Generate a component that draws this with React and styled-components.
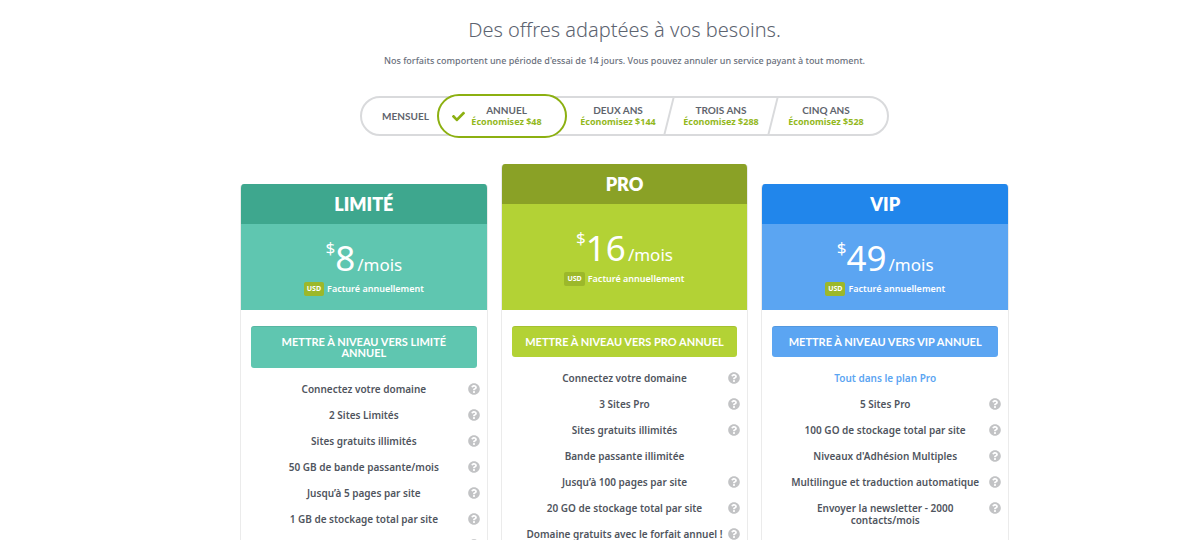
import React, { useState } from "react"
import styled, { createGlobalStyle } from "styled-components"

import { FaCheck, FaQuestionCircle } from "react-icons/fa"

const GlobalStyle = createGlobalStyle`
  * {
    box-sizing: border-box;
  }
  body {
    margin: 0;
    background-color: #fff;
    color: #50555e;
    font-family: "Noto Sans", "Open Sans", sans-serif;
  }
`

const Page = styled.main`
  display: flex;
  flex-direction: column;
  align-items: center;
  padding: 16px 0 0 49px;
`

const Title = styled.h1`
  margin: 0;
  font-size: 20px;
  line-height: 28px;
  font-weight: 300;
  color: #5c6370;
`

const Intro = styled.p`
  margin: 9px 0 27px;
  font-size: 9px;
  line-height: 16px;
  font-weight: 500;
  color: #6a707c;
`

const Periods = styled.div`
  display: flex;
  height: 40px;
  border: 2px solid #d9dadc;
  border-radius: 20px;
`

const Period = styled.button`
  position: relative;
  display: flex;
  align-items: center;
  justify-content: center;
  gap: 6px;
  width: ${(props) => props.$width || 104}px;
  padding: ${(props) => props.$padding || "0"};
  border: none;
  background-color: transparent;
  font-family: inherit;
  cursor: pointer;

  ${(props) =>
    props.$divided &&
    `
    &::after {
      content: "";
      position: absolute;
      top: 0;
      bottom: 0;
      right: -1px;
      width: 2px;
      background-color: #d9dadc;
      transform: skewX(-14deg);
    }
  `}

  ${(props) =>
    props.$active &&
    `
    margin: -4px 0;
    border: 2px solid #8cb011;
    border-radius: 22px;
    background-color: #fff;
    color: #8cb011;
  `}
`

const PeriodText = styled.span`
  display: flex;
  flex-direction: column;
  align-items: center;
`

const PeriodName = styled.span`
  font-family: Lato, sans-serif;
  font-size: 10px;
  line-height: 11px;
  font-weight: 700;
  color: #5f646d;
`

const Saving = styled.span`
  font-size: 9px;
  line-height: 11px;
  font-weight: 700;
  color: #93b81c;
`

const Plans = styled.div`
  display: flex;
  align-items: flex-start;
  justify-content: center;
  gap: 13px;
  width: 100%;
  max-width: 769px;
  margin-top: 28px;
`

const Card = styled.section`
  flex: 1;
  margin-top: ${(props) => (props.$featured ? "0" : "20px")};
  border: 1px solid #ebebeb;
  border-top: none;
  border-radius: 4px;
  overflow: hidden;
`

const PlanName = styled.h2`
  margin: 0;
  background-color: ${(props) => props.$color};
  font-family: Lato, sans-serif;
  font-size: 18px;
  line-height: 40px;
  font-weight: 800;
  text-align: center;
  color: #fff;
`

const PriceBox = styled.div`
  display: flex;
  flex-direction: column;
  align-items: center;
  padding: ${(props) => (props.$featured ? "20px 0 24px" : "10px 0 14px")};
  background-color: ${(props) => props.$color};
  color: #fff;
`

const Price = styled.div`
  display: flex;
  align-items: baseline;
  height: 48px;
`

const Currency = styled.span`
  align-self: flex-start;
  font-size: 17px;
  line-height: 28px;
`

const Amount = styled.span`
  font-size: 35px;
  line-height: 48px;
`

const PerMonth = styled.span`
  margin-left: 2px;
  font-size: 17px;
  line-height: 20px;
`

const Billing = styled.div`
  display: flex;
  align-items: center;
  gap: 3px;
  font-size: 9px;
  line-height: 14px;
  font-weight: 600;
`

const Badge = styled.span`
  padding: 0 3px;
  border-radius: 2px;
  background-color: #9cb82a;
  font-size: 7px;
  font-weight: 700;
`

const Upgrade = styled.button`
  display: block;
  width: calc(100% - 20px);
  margin: 16px 10px 8px;
  padding: 10px;
  border: none;
  border-radius: 3px;
  background-color: ${(props) => props.$color};
  box-shadow: inset 0 1px 0 rgba(0, 0, 0, 0.08);
  font-family: Lato, sans-serif;
  font-size: 11px;
  line-height: 11px;
  font-weight: 700;
  text-transform: uppercase;
  color: #fff;
  cursor: pointer;
`

const Features = styled.ul`
  margin: 0;
  padding: 0;
  list-style: none;
`

const Feature = styled.li`
  display: grid;
  grid-template-columns: 22px 1fr 22px;
  padding: 7px 0;
  font-size: 10px;
  line-height: 12px;
  font-weight: 600;
  text-align: center;
  color: ${(props) => props.$color || "#50555e"};
`

const FeatureText = styled.span`
  grid-column: 2;
`

const Help = styled.button`
  display: block;
  width: 12px;
  height: 12px;
  margin-left: 3px;
  padding: 0;
  border: none;
  background-color: transparent;
  font-size: 12px;
  line-height: 12px;
  color: #c2c3c5;
  cursor: pointer;

  svg {
    display: block;
  }
`

const periods = [
  { name: "MENSUEL", width: 75, padding: "0 0 0 12px" },
  { name: "ANNUEL", saving: "Économisez $48", width: 130, padding: "0 10px 0 0" },
  { name: "DEUX ANS", saving: "Économisez $144", width: 102, divided: true },
  { name: "TROIS ANS", saving: "Économisez $288", width: 104, divided: true },
  { name: "CINQ ANS", saving: "Économisez $528", width: 114, padding: "0 8px 0 0" },
]

const plans = [
  {
    name: "LIMITÉ",
    price: 8,
    dark: "#3ea78e",
    light: "#5fc6b0",
    button: "Mettre à niveau vers Limité annuel",
    features: [
      { text: "Connectez votre domaine", help: true },
      { text: "2 Sites Limités", help: true },
      { text: "Sites gratuits illimités", help: true },
      { text: "50 GB de bande passante/mois", help: true },
      { text: "Jusqu’à 5 pages par site", help: true },
      { text: "1 GB de stockage total par site", help: true },
      { text: "Domaine gratuit", help: true },
    ],
  },
  {
    name: "PRO",
    price: 16,
    dark: "#8aa126",
    light: "#b3d235",
    featured: true,
    button: "Mettre à niveau vers Pro annuel",
    features: [
      { text: "Connectez votre domaine", help: true },
      { text: "3 Sites Pro", help: true },
      { text: "Sites gratuits illimités", help: true },
      { text: "Bande passante illimitée" },
      { text: "Jusqu’à 100 pages par site", help: true },
      { text: "20 GO de stockage total par site", help: true },
      { text: "Domaine gratuits avec le forfait annuel !", help: true },
    ],
  },
  {
    name: "VIP",
    price: 49,
    dark: "#2186eb",
    light: "#5ba5f2",
    button: "Mettre à niveau vers VIP annuel",
    features: [
      { text: "Tout dans le plan Pro", color: "#5ba5f2" },
      { text: "5 Sites Pro", help: true },
      { text: "100 GO de stockage total par site", help: true },
      { text: "Niveaux d'Adhésion Multiples", help: true },
      { text: "Multilingue et traduction automatique", help: true },
      { text: "Envoyer la newsletter - 2000 contacts/mois", help: true },
      { text: "Assistance VIP", help: true },
    ],
  },
]

const PlanCard = (props) => {
  const { plan } = props

  return (
    <Card $featured={plan.featured}>
      <PlanName $color={plan.dark}>{plan.name}</PlanName>
      <PriceBox $color={plan.light} $featured={plan.featured}>
        <Price>
          <Currency>$</Currency>
          <Amount>{plan.price}</Amount>
          <PerMonth>/mois</PerMonth>
        </Price>
        <Billing>
          <Badge>USD</Badge>
          <span>Facturé annuellement</span>
        </Billing>
      </PriceBox>
      <Upgrade $color={plan.light}>{plan.button}</Upgrade>
      <Features>
        {plan.features.map((feature) => (
          <Feature key={feature.text} $color={feature.color}>
            <FeatureText>{feature.text}</FeatureText>
            {feature.help && (
              <Help aria-label={feature.text}>
                <FaQuestionCircle size={12} />
              </Help>
            )}
          </Feature>
        ))}
      </Features>
    </Card>
  )
}

const App = () => {
  const [active, setActive] = useState("ANNUEL")

  return (
    <>
      <GlobalStyle />
      <Page>
        <Title>Des offres adaptées à vos besoins.</Title>
        <Intro>
          Nos forfaits comportent une période d'essai de 14 jours. Vous pouvez
          annuler un service payant à tout moment.
        </Intro>

        <Periods>
          {periods.map((period) => (
            <Period
              key={period.name}
              $width={period.width}
              $padding={period.padding}
              $divided={period.divided}
              $active={period.name === active}
              aria-pressed={period.name === active}
              onClick={() => setActive(period.name)}
            >
              {period.name === active && <FaCheck size={13} />}
              <PeriodText>
                <PeriodName>{period.name}</PeriodName>
                {period.saving && <Saving>{period.saving}</Saving>}
              </PeriodText>
            </Period>
          ))}
        </Periods>

        <Plans>
          {plans.map((plan) => (
            <PlanCard key={plan.name} plan={plan} />
          ))}
        </Plans>
      </Page>
    </>
  )
}

export default App
